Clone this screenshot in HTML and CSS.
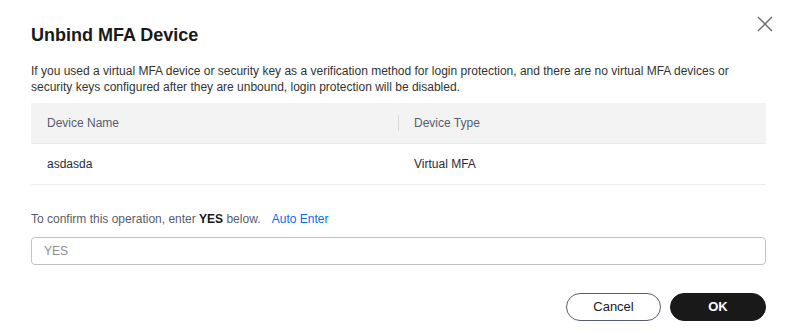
FILE: index.html
```html
<!DOCTYPE html>
<html lang="en">
<head>
  <meta charset="UTF-8" />
  <meta name="viewport" content="width=device-width, initial-scale=1.0"/>
  <title>Unbind MFA Device</title>
  <link rel="stylesheet" href="styles.css">
</head>
<body>

  <div class="dialog">
    <div class="dialog-head">
      <h2 class="dialog-title">Unbind MFA Device</h2>
      <button class="close-btn" aria-label="Close">
        <svg width="16" height="16" viewBox="0 0 16 16">
          <path d="M1 1 L15 15 M15 1 L1 15" stroke="#6b6b6b" stroke-width="1.4" fill="none"/>
        </svg>
      </button>
    </div>

    <p class="tip">If you used a virtual MFA device or security key as a verification method for login protection, and there are no virtual MFA devices or security keys configured after they are unbound, login protection will be disabled.</p>

    <table class="device-table">
      <thead>
        <tr>
          <th class="col-name">Device Name</th>
          <th><span class="th-sep"></span>Device Type</th>
        </tr>
      </thead>
      <tbody>
        <tr>
          <td>asdasda</td>
          <td>Virtual MFA</td>
        </tr>
      </tbody>
    </table>

    <div class="confirm-line">
      To confirm this operation, enter <b>YES</b> below.
      <a href="#" class="auto-enter">Auto Enter</a>
    </div>

    <input class="confirm-input" type="text" placeholder="YES" />

    <div class="dialog-foot">
      <button class="btn btn-cancel">Cancel</button>
      <button class="btn btn-ok">OK</button>
    </div>
  </div>

</body>
</html>
```

FILE: styles.css
```css
* {
  margin: 0;
  padding: 0;
  box-sizing: border-box;
  font-family: 'Liberation Sans', Arial, Helvetica, sans-serif;
}

body {
  background: #fff;
  width: 788px;
  height: 334px;
  overflow: hidden;
}

.dialog {
  padding: 15px 22px 0 31px;
  display: flex;
  flex-direction: column;
}

.dialog-head {
  display: flex;
  align-items: flex-start;
  justify-content: space-between;
}

.dialog-title {
  margin-top: 10px;
  font-size: 18px;
  line-height: 20px;
  font-weight: bold;
  color: #191919;
}

.close-btn {
  border: none;
  background: none;
  width: 16px;
  height: 17px;
  margin-right: -7px;
  cursor: pointer;
}

.close-btn svg {
  display: block;
}

.tip {
  margin-top: 18px;
  font-size: 12px;
  line-height: 16px;
  color: #333;
}

.device-table {
  margin-top: 8px;
  width: 100%;
  border-collapse: collapse;
  font-size: 12px;
}

.device-table th {
  position: relative;
  height: 40px;
  padding: 0 16px;
  text-align: left;
  font-weight: normal;
  color: #575d6c;
  background: #f3f3f3;
  border-bottom: 1px solid #ececec;
}

.device-table .col-name {
  width: 367px;
}

.th-sep {
  position: absolute;
  left: 0;
  top: 12px;
  width: 1px;
  height: 16px;
  background: #d9d9d9;
}

.device-table td {
  height: 41px;
  padding: 0 16px;
  color: #252b3a;
  border-bottom: 1px solid #ececec;
}

.confirm-line {
  margin-top: 25px;
  font-size: 12px;
  line-height: 18px;
  color: #575d6c;
}

.confirm-line b {
  color: #191919;
}

.auto-enter {
  margin-left: 8px;
  color: #0a6cf5;
  text-decoration: none;
}

.confirm-input {
  margin-top: 9px;
  width: 100%;
  height: 28px;
  padding: 0 12px;
  font-size: 12px;
  border: 1px solid #c2c2c2;
  border-radius: 4px;
  outline: none;
}

.confirm-input::placeholder {
  color: #8a8e99;
}

.dialog-foot {
  margin-top: 28px;
  display: flex;
  justify-content: flex-end;
  gap: 9px;
}

.btn {
  width: 96px;
  height: 28px;
  border-radius: 14px;
  font-size: 13px;
  cursor: pointer;
}

.btn-cancel {
  width: 95px;
  background: #fff;
  border: 1px solid #575d6c;
  color: #191919;
}

.btn-ok {
  background: #191919;
  border: 1px solid #191919;
  color: #fff;
  font-weight: bold;
}
```
